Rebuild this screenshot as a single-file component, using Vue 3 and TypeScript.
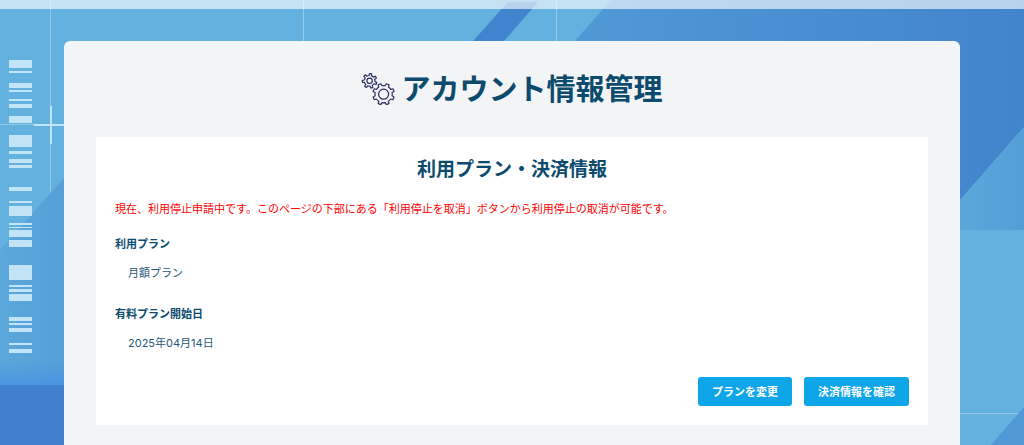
<script setup lang="ts">
interface PlanItem {
  label: string
  value: string
}

const items: PlanItem[] = [
  { label: '利用プラン', value: '月額プラン' },
  { label: '有料プラン開始日', value: '2025年04月14日' },
]

// [top, height] of each stripe in the left-hand barcode
const stripes: [number, number][] = [
  [60, 8], [71, 2], [83, 5], [90, 2], [99, 2], [104, 4], [116, 7], [135, 12],
  [151, 3], [159, 4], [165, 3], [187, 4], [201, 2], [206, 10], [223, 2],
  [227, 1], [230, 7], [240, 7], [265, 15], [285, 2], [289, 3], [294, 7],
  [317, 4], [323, 2], [328, 4], [343, 2], [349, 4],
]

// Outline of a gear: each tooth is a flat tip between two root arcs
function gear(cx: number, cy: number, root: number, tip: number, teeth: number, turn: number): string {
  const step = 360 / teeth
  const at = (r: number, deg: number): string => {
    const a = ((deg - 90) * Math.PI) / 180
    return `${(cx + r * Math.cos(a)).toFixed(2)} ${(cy + r * Math.sin(a)).toFixed(2)}`
  }
  let d = ''
  for (let i = 0; i < teeth; i++) {
    const mid = turn + i * step
    d += `${i === 0 ? 'M' : `A${root} ${root} 0 0 1 `}${at(root, mid - step * 0.26)}`
    d += `L${at(tip, mid - step * 0.17)}A${tip} ${tip} 0 0 1 ${at(tip, mid + step * 0.17)}`
    d += `L${at(root, mid + step * 0.26)}`
  }
  return `${d}A${root} ${root} 0 0 1 ${at(root, turn - step * 0.26)}Z`
}

const smallGear = gear(8.6, 7.8, 5.3, 7.3, 7, 8)
const largeGear = gear(22.6, 21.2, 8.6, 10.8, 8, 22.5)
</script>

<template>
  <div class="page">
    <svg class="backdrop" viewBox="0 0 1024 445" preserveAspectRatio="xMinYMin slice" aria-hidden="true">
      <defs>
        <linearGradient id="sweep" gradientUnits="userSpaceOnUse" x1="575" y1="0" x2="1024" y2="0">
          <stop offset="0" stop-color="#5099d6" />
          <stop offset="1" stop-color="#4284cd" />
        </linearGradient>
        <linearGradient id="wedge" gradientUnits="userSpaceOnUse" x1="0" y1="0" x2="64" y2="0">
          <stop offset="0" stop-color="#5ba8db" />
          <stop offset="1" stop-color="#569fd8" />
        </linearGradient>
        <linearGradient id="glow" x1="0" y1="0" x2="0" y2="1">
          <stop offset="0" stop-color="#4a96e0" stop-opacity="0" />
          <stop offset="1" stop-color="#4a96e0" />
        </linearGradient>
        <linearGradient id="facet" gradientUnits="userSpaceOnUse" x1="960" y1="0" x2="1024" y2="0">
          <stop offset="0" stop-color="#5aa8da" />
          <stop offset="1" stop-color="#549ed8" />
        </linearGradient>
      </defs>
      <rect width="1024" height="445" fill="#62b1de" />
      <path d="M508 2h30L504 41h-31z" fill="#4283ce" />
      <path d="M611 0H1024V127L934 230H408z" fill="url(#sweep)" />
      <path d="M1024 127V230H934z" fill="url(#facet)" />
      <path d="M1024 407V445H991z" fill="#5099d6" />
      <path d="M0 250L64 178V385H0z" fill="url(#wedge)" />
      <rect y="360" width="64" height="25" fill="url(#glow)" />
      <rect y="385" width="500" height="60" fill="#4180cb" />
      <g fill="#fff" fill-opacity=".32">
        <rect x="50" width="1" height="192" />
        <rect x="303" width="1" height="60" />
        <rect x="556" width="1" height="60" />
        <rect y="124" width="34" height="1" />
        <rect x="940" y="413" width="78" height="1" />
      </g>
      <g fill="#c3e3f6">
        <rect x="34" y="124" width="36" height="2" />
        <rect x="50" y="106" width="2" height="38" />
        <rect v-for="[y, h] in stripes" :key="y" x="9" :y="y" width="23" :height="h" />
      </g>
    </svg>

    <header class="band"></header>

    <main class="card">
      <h1 class="title">
        <svg class="gears" viewBox="0 0 34 32" aria-hidden="true">
          <path :d="smallGear" />
          <circle cx="8.6" cy="7.8" r="2.7" />
          <path :d="largeGear" />
          <circle cx="22.6" cy="21.2" r="5" />
        </svg>
        アカウント情報管理
      </h1>

      <section class="panel">
        <h2 class="subtitle">利用プラン・決済情報</h2>
        <p class="notice">現在、利用停止申請中です。このページの下部にある「利用停止を取消」ボタンから利用停止の取消が可能です。</p>
        <dl class="list">
          <div v-for="item in items" :key="item.label" class="item">
            <dt>{{ item.label }}</dt>
            <dd>{{ item.value }}</dd>
          </div>
        </dl>
        <div class="actions">
          <button type="button">プランを変更</button>
          <button type="button">決済情報を確認</button>
        </div>
      </section>
    </main>
  </div>
</template>

<style>
body {
  margin: 0;
}
</style>

<style scoped>
.page {
  position: relative;
  display: flex;
  flex-direction: column;
  box-sizing: border-box;
  min-height: 100vh;
  font-family: Inter, "Noto Sans CJK JP", sans-serif;
  font-size: 11px;
  line-height: 18px;
  color: #0c4a6e;
}

.backdrop {
  position: absolute;
  inset: 0;
  width: 100%;
  height: 100%;
}

.band {
  position: relative;
  height: 9px;
  background: rgba(255, 255, 255, 0.63);
}

.card {
  position: relative;
  flex: 1;
  margin: 32px 64px 0;
  padding: 32px 32px 20px;
  border-radius: 6px 6px 0 0;
  background: #f3f4f6;
}

.title {
  display: flex;
  justify-content: center;
  align-items: flex-start;
  gap: 6px;
  margin: 0 0 30px;
  font-size: 29px;
  line-height: 34px;
  font-weight: 700;
}

.gears {
  flex: none;
  width: 34px;
  height: 32px;
  fill: none;
  stroke: #2c2f66;
  stroke-width: 1.2;
  stroke-linejoin: round;
}

.panel {
  padding: 19px;
  background: #fff;
}

.subtitle {
  margin: 0;
  text-align: center;
  font-size: 19px;
  line-height: 28px;
  font-weight: 700;
}

.notice {
  margin: 16px 0 17px;
  color: #f00;
}

.list {
  display: flex;
  flex-direction: column;
  gap: 23px;
  margin: 0;
}

.item dt {
  font-weight: 700;
}

.item dd {
  margin: 11px 0 0;
  padding-left: 13px;
  color: #1f5878;
}

.actions {
  display: flex;
  flex-wrap: wrap;
  justify-content: flex-end;
  gap: 12px;
  margin-top: 25px;
}

.actions button {
  height: 29px;
  padding: 0 14px;
  border: 0;
  border-radius: 3px;
  background: #0ea5e9;
  color: #fff;
  font: inherit;
  font-weight: 700;
  cursor: pointer;
}
</style>
